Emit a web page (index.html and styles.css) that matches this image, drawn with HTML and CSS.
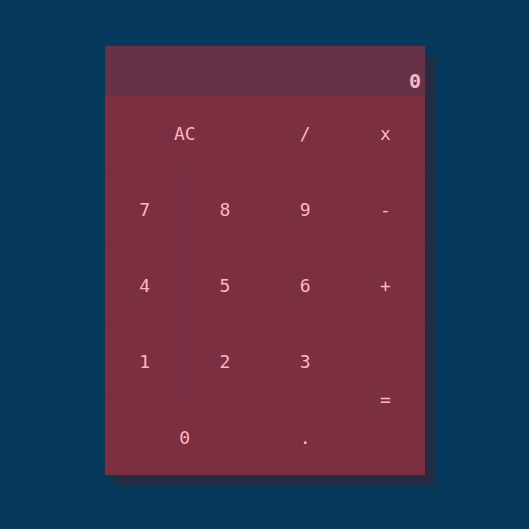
FILE: index.html
```html
<!DOCTYPE html>
<html>
<head>
<meta charset="utf-8">
<link rel="stylesheet" href="styles.css">
</head>
<body>
<div class="calc">
  <div class="display">0</div>
  <div class="keys">
    <div class="key span2">AC</div>
    <div class="key">/</div>
    <div class="key">x</div>
    <div class="key">7</div>
    <div class="key">8</div>
    <div class="key">9</div>
    <div class="key">-</div>
    <div class="key">4</div>
    <div class="key">5</div>
    <div class="key">6</div>
    <div class="key">+</div>
    <div class="key">1</div>
    <div class="key">2</div>
    <div class="key">3</div>
    <div class="key tall">=</div>
    <div class="key span2">0</div>
    <div class="key">.</div>
  </div>
</div>
</body>
</html>
```
FILE: styles.css
```css
html, body {
  margin: 0;
  padding: 0;
  background: #053a5c;
  width: 529px;
  height: 529px;
}
body {
  padding-top: 46px;
  padding-left: 105px;
  box-sizing: border-box;
  font-family: "DejaVu Sans Mono", monospace;
}
.calc {
  width: 320px;
  box-shadow: 10px 10px 6px #2a2a40;
}
.display {
  height: 50px;
  background: #66324a;
  color: #ffb6c1;
  font-weight: bold;
  font-size: 20px;
  display: flex;
  align-items: flex-end;
  justify-content: flex-end;
  padding: 0 4px 3px 0;
  box-sizing: border-box;
}
.keys {
  display: grid;
  grid-template-columns: repeat(4, 1fr);
  grid-template-rows: repeat(5, 1fr);
  gap: 1px;
  height: 379px;
  background: #6a3045;
}
.key {
  background: #7b2f40;
  color: #ffb6c1;
  font-size: 18px;
  display: flex;
  align-items: center;
  justify-content: center;
}
.span2 { grid-column: span 2; }
.tall { grid-row: span 2; }
```
